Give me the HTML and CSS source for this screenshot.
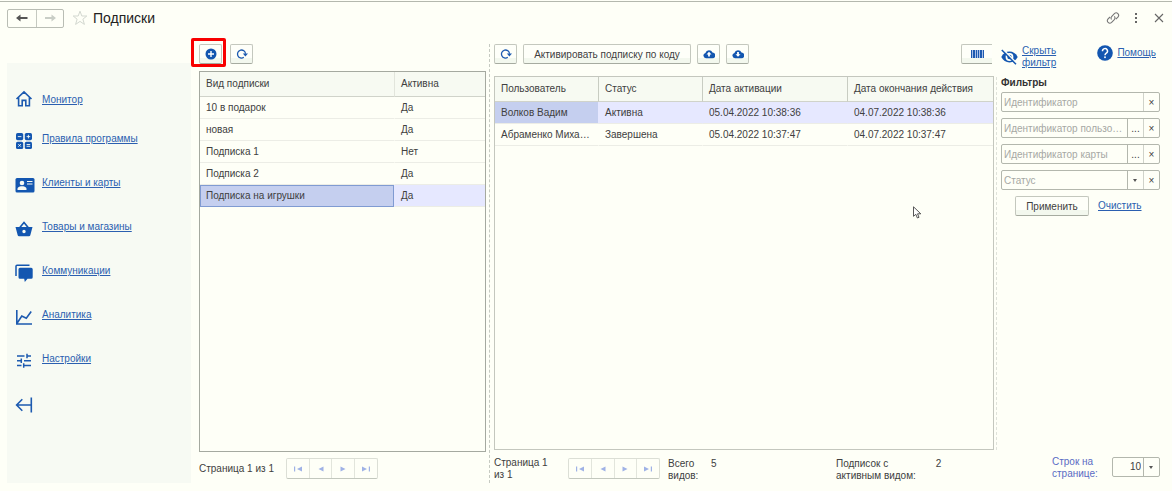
FILE: index.html
```
<!DOCTYPE html>
<html lang="ru">
<head>
<meta charset="UTF-8">
<meta name="viewport" content="width=device-width, initial-scale=1.0">
<title>Подписки</title>
<link rel="stylesheet" href="styles.css">
</head>
<body>
<header class="header">
    <div class="history">
        <button type="button" aria-label="Назад"><svg width="12" height="8" viewBox="0 0 12 8"><path d="M0 4L4.5 0.5V3H11.5V5H4.5V7.5Z" fill="#555"/></svg></button>
        <button type="button" class="off" aria-label="Вперед"><svg width="12" height="8" viewBox="0 0 12 8"><path d="M12 4L7.5 0.5V3H1V5H7.5V7.5Z" fill="#c9cec6"/></svg></button>
    </div>
    <svg class="star" width="16" height="16" viewBox="0 0 16 16"><path d="M8 1.2L9.8 6H14.8L10.9 9.2L12.4 14.4L8 11.4L3.6 14.4L5.1 9.2L1.2 6H6.2Z" fill="none" stroke="#d3d8d0"/></svg>
    <h1>Подписки</h1>
    <div class="window-buttons">
        <button type="button" aria-label="Ссылка"><svg width="14" height="14" viewBox="0 0 14 14" fill="none" stroke="#777" stroke-width="1.1"><path d="M5.5 8.5A2.4 2.4 0 0 1 5.6 5.6L8.6 2.4A2.5 2.5 0 0 1 12.1 5.9L9.9 8.1M8.3 5.4A2.4 2.4 0 0 1 8.3 8.6L5.4 11.6A2.5 2.5 0 0 1 1.9 8.1L4 6"/></svg></button>
        <button type="button" aria-label="Меню"><svg width="14" height="14" viewBox="0 0 14 14" fill="#666"><rect x="6" y="2" width="2" height="2"/><rect x="6" y="6" width="2" height="2"/><rect x="6" y="10" width="2" height="2"/></svg></button>
        <button type="button" aria-label="Закрыть"><svg width="14" height="14" viewBox="0 0 14 14" stroke="#666" stroke-width="1.1"><path d="M3 3L11 11M11 3L3 11"/></svg></button>
    </div>
</header>

<main class="main">
    <nav class="sidebar">
        <ul>
            <li class="home"><svg width="18" height="18" viewBox="0 0 18 18" fill="none" stroke="#1d5ab0" stroke-width="1.6"><path d="M1.5 9L9 1.8L16.5 9M3.6 7.5V15.7H7.2V10.4H10.8V15.7H14.4V7.5"/></svg><a href="#">Монитор</a></li>
            <li><svg width="18" height="18" viewBox="0 0 18 18" fill="#1356b0"><rect x="1" y="1" width="7.2" height="7.2" rx="1.6"/><rect x="9.8" y="1" width="7.2" height="7.2" rx="1.6"/><rect x="1" y="9.8" width="7.2" height="7.2" rx="1.6"/><rect x="9.8" y="9.8" width="7.2" height="7.2" rx="1.6"/><path d="M2.8 4.6H6.4M11.6 4.6H15.2M13.4 2.8V6.4M3.3 12.1L5.9 14.7M5.9 12.1L3.3 14.7M11.6 12.5H15.2M11.6 14.3H15.2" stroke="#f7faf3" stroke-width="0.9"/></svg><a href="#">Правила программы</a></li>
            <li><svg width="20" height="18" viewBox="0 0 20 18" fill="#1356b0"><rect x="0.5" y="2" width="19" height="14.5" rx="1.5"/><circle cx="7" cy="7" r="2.3" fill="#f7faf3"/><path d="M2.5 14V12.8C2.5 10.8 5.5 10.2 7 10.2S11.5 10.8 11.5 12.8V14Z" fill="#f7faf3"/><path d="M12 5.5H17.5M12 8H17.5" stroke="#f7faf3" stroke-width="1.1"/></svg><a href="#">Клиенты и карты</a></li>
            <li><svg width="18" height="18" viewBox="0 0 18 18" fill="#1356b0"><path fill-rule="evenodd" d="M0.5 7H4.2L9 1.2L13.8 7H17.5L15.3 15.2Q15 16.3 14 16.3H4Q3 16.3 2.7 15.2ZM6.3 7H11.7L9 3.7ZM9 9.8A1.7 1.7 0 1 0 9 13.2A1.7 1.7 0 1 0 9 9.8Z"/></svg><a href="#">Товары и магазины</a></li>
            <li><svg width="18" height="18" viewBox="0 0 18 18" fill="#1356b0"><path d="M1 12V2.2Q1 1.2 2 1.2H14.5" fill="none" stroke="#1356b0" stroke-width="1.5"/><path d="M5 3.8H16.2Q17.7 3.8 17.7 5.3V13.3Q17.7 14.8 16.2 14.8H12.5L9.8 18L9.2 14.8H5Q3.5 14.8 3.5 13.3V5.3Q3.5 3.8 5 3.8Z"/></svg><a href="#">Коммуникации</a></li>
            <li><svg width="18" height="18" viewBox="0 0 18 18" fill="none" stroke="#1d5ab0" stroke-width="1.6"><path d="M1.8 2V16H17M2.2 15L6.8 8L11.3 10.3L16.2 3.5"/></svg><a href="#">Аналитика</a></li>
            <li><svg width="18" height="18" viewBox="0 0 18 18" fill="none" stroke="#1d5ab0" stroke-width="1.5"><path d="M2 4H9.5M12 1.7V6.3M12 4H16M2 8.7H5.8M6.3 6.4V11M9 8.7H16M2 13.5H6.5M8.7 11.2V15.8M8.7 13.5H16"/></svg><a href="#">Настройки</a></li>
            <li><button type="button" class="collapse" aria-label="Свернуть меню"><svg width="18" height="18" viewBox="0 0 18 18" fill="none" stroke="#1d5ab0" stroke-width="1.6"><path d="M16.3 1.5V16.5M16 9H1.5M7.3 3.2L1.6 9L7.3 14.8"/></svg></button></li>
        </ul>
    </nav>

    <section class="kinds">
        <div class="toolbar">
            <div class="marked"><button type="button" class="btn" aria-label="Добавить"><svg width="12" height="12" viewBox="0 0 12 12"><circle cx="6" cy="6" r="5.5" fill="#1356b0"/><path d="M6 3V9M3 6H9" stroke="#fff" stroke-width="1.4"/></svg></button></div>
            <button type="button" class="btn" aria-label="Обновить"><svg width="12" height="12" viewBox="0 0 12 12"><path d="M7.8 9.3A4 4 0 1 1 9.5 5.8" fill="none" stroke="#1d5ab0" stroke-width="1.3"/><path d="M6.8 5.5H12L9.4 8.5Z" fill="#1d5ab0"/></svg></button>
        </div>
        <div class="grid-box">
            <table class="kinds-table">
                <thead>
                    <tr><th>Вид подписки</th><th>Активна</th></tr>
                </thead>
                <tbody>
                    <tr><td>10 в подарок</td><td>Да</td></tr>
                    <tr><td>новая</td><td>Да</td></tr>
                    <tr><td>Подписка 1</td><td>Нет</td></tr>
                    <tr><td>Подписка 2</td><td>Да</td></tr>
                    <tr class="selected"><td>Подписка на игрушки</td><td>Да</td></tr>
                </tbody>
            </table>
        </div>
        <div class="footer">
            <span>Страница 1 из 1</span>
            <div class="pager">
                <button type="button" aria-label="Первая"><svg width="8" height="6" viewBox="0 0 8 6"><path d="M0 0.5H1.2V5.5H0ZM8 0.5V5.5L3 3Z"/></svg></button>
                <button type="button" aria-label="Предыдущая"><svg width="8" height="6" viewBox="0 0 8 6"><path d="M6.5 0.5V5.5L1.5 3Z"/></svg></button>
                <button type="button" aria-label="Следующая"><svg width="8" height="6" viewBox="0 0 8 6"><path d="M1.5 0.5V5.5L6.5 3Z"/></svg></button>
                <button type="button" aria-label="Последняя"><svg width="8" height="6" viewBox="0 0 8 6"><path d="M8 0.5H6.8V5.5H8ZM0 0.5V5.5L5 3Z"/></svg></button>
            </div>
        </div>
    </section>

    <section class="users">
        <div class="toolbar">
            <button type="button" class="btn" aria-label="Обновить"><svg width="12" height="12" viewBox="0 0 12 12"><path d="M7.8 9.3A4 4 0 1 1 9.5 5.8" fill="none" stroke="#1d5ab0" stroke-width="1.3"/><path d="M6.8 5.5H12L9.4 8.5Z" fill="#1d5ab0"/></svg></button>
            <button type="button" class="btn wide">Активировать подписку по коду</button>
            <button type="button" class="btn" aria-label="Выгрузить"><svg width="12" height="10" viewBox="0 0 12 10"><path d="M3 9.2A2.7 2.7 0 0 1 2.4 3.9A3.8 3.8 0 0 1 9.5 3.6A2.8 2.8 0 0 1 9.3 9.2Z" fill="#1356b0"/><path d="M6 2.8L8.5 5.4H6.9V7.6H5.1V5.4H3.5Z" fill="#fff"/></svg></button>
            <button type="button" class="btn" aria-label="Загрузить"><svg width="12" height="10" viewBox="0 0 12 10"><path d="M3 9.2A2.7 2.7 0 0 1 2.4 3.9A3.8 3.8 0 0 1 9.5 3.6A2.8 2.8 0 0 1 9.3 9.2Z" fill="#1356b0"/><path d="M6 7.8L8.5 5.2H6.9V3H5.1V5.2H3.5Z" fill="#fff"/></svg></button>
            <button type="button" class="btn barcode" aria-label="Штрихкод"><svg width="13" height="8" viewBox="0 0 13 8" fill="#1d5ab0"><rect width="13" height="8" fill="#a9bfe6"/><path d="M0 0H1V8H0ZM2 0H4V8H2ZM5 0H6V8H5ZM7 0H8V8H7ZM9 0H11V8H9ZM12 0H13V8H12Z"/></svg></button>
        </div>
        <div class="grid-box">
            <table class="users-table">
                <thead>
                    <tr><th>Пользователь</th><th>Статус</th><th>Дата активации</th><th>Дата окончания действия</th></tr>
                </thead>
                <tbody>
                    <tr class="selected"><td>Волков Вадим</td><td>Активна</td><td>05.04.2022 10:38:36</td><td>04.07.2022 10:38:36</td></tr>
                    <tr><td>Абраменко Миха…</td><td>Завершена</td><td>05.04.2022 10:37:47</td><td>04.07.2022 10:37:47</td></tr>
                </tbody>
            </table>
            <svg class="cursor" width="9" height="13" viewBox="0 0 9 13"><path d="M0.5 0.8V10.3L2.8 8.3L4.4 12L6 11.3L4.5 7.8H7.8Z" fill="#fff" stroke="#444" stroke-width="0.9"/></svg>
        </div>
        <div class="footer">
            <span class="page">Страница 1 из 1</span>
            <div class="pager">
                <button type="button" aria-label="Первая"><svg width="8" height="6" viewBox="0 0 8 6"><path d="M0 0.5H1.2V5.5H0ZM8 0.5V5.5L3 3Z"/></svg></button>
                <button type="button" aria-label="Предыдущая"><svg width="8" height="6" viewBox="0 0 8 6"><path d="M6.5 0.5V5.5L1.5 3Z"/></svg></button>
                <button type="button" aria-label="Следующая"><svg width="8" height="6" viewBox="0 0 8 6"><path d="M1.5 0.5V5.5L6.5 3Z"/></svg></button>
                <button type="button" aria-label="Последняя"><svg width="8" height="6" viewBox="0 0 8 6"><path d="M8 0.5H6.8V5.5H8ZM0 0.5V5.5L5 3Z"/></svg></button>
            </div>
            <dl class="totals">
                <dt>Всего<br>видов:</dt><dd>5</dd>
                <dt>Подписок с<br>активным видом:</dt><dd>2</dd>
            </dl>
        </div>
    </section>

    <aside class="side">
        <div class="links">
            <svg class="eye" width="17" height="16" viewBox="0 0 17 16"><path d="M0.3 8C2 4.5 5 2.6 8.5 2.6S15 4.5 16.7 8C15 11.5 12 13.4 8.5 13.4S2 11.5 0.3 8Z" fill="#1356b0"/><circle cx="8.5" cy="8" r="3.9" fill="#fefff7"/><circle cx="8.5" cy="8" r="2.2" fill="#1356b0"/><path d="M1.8 0.2L15.8 14.2" stroke="#fefff7" stroke-width="1.6"/><path d="M0.8 1L15 15.2" stroke="#1356b0" stroke-width="1.5"/></svg>
            <a href="#" class="hide-filter">Скрыть фильтр</a>
            <div class="help">
                <svg width="16" height="16" viewBox="0 0 16 16"><circle cx="8" cy="8" r="7.8" fill="#1356b0"/><path d="M5.5 6.3A2.5 2.5 0 1 1 9.3 8.2Q8 9 8 10.2" fill="none" stroke="#fff" stroke-width="1.5"/><rect x="7.2" y="11.4" width="1.6" height="1.7" fill="#fff"/></svg>
                <a href="#">Помощь</a>
            </div>
        </div>
        <form class="filters">
            <h2>Фильтры</h2>
            <div class="field"><input type="text" placeholder="Идентификатор" aria-label="Идентификатор"><button type="button" aria-label="Очистить">×</button></div>
            <div class="field"><input type="text" placeholder="Идентификатор пользователя" aria-label="Идентификатор пользователя"><button type="button" class="dots" aria-label="Выбрать">...</button><button type="button" aria-label="Очистить">×</button></div>
            <div class="field"><input type="text" placeholder="Идентификатор карты" aria-label="Идентификатор карты"><button type="button" class="dots" aria-label="Выбрать">...</button><button type="button" aria-label="Очистить">×</button></div>
            <div class="field">
                <div class="drop">
                    <select class="empty" aria-label="Статус">
                        <option>Статус</option>
                    </select>
                    <span class="arrow"></span>
                </div>
                <button type="button" aria-label="Очистить">×</button>
            </div>
            <div class="actions">
                <button type="button" class="btn apply">Применить</button>
                <a href="#">Очистить</a>
            </div>
        </form>
        <div class="rows">
            <label for="rows">Строк на странице:</label>
            <div class="field">
                <div class="drop">
                    <select id="rows" class="count">
                        <option>10</option>
                    </select>
                    <span class="arrow"></span>
                </div>
            </div>
        </div>
    </aside>
</main>
</body>
</html>
```
FILE: styles.css
```
* {
    box-sizing: border-box;
}

body {
    margin: 0;
    min-height: 100vh;
    display: flex;
    flex-direction: column;
    background: #fefff7;
    color: #404040;
    font-family: "Liberation Sans", Arial, sans-serif;
    font-size: 10px;
    line-height: 12px;
}

button, input, select {
    font-family: inherit;
    font-size: 10px;
    color: #404040;
}

button {
    display: flex;
    align-items: center;
    justify-content: center;
    padding: 0;
    border: none;
    background: none;
    cursor: pointer;
}

svg {
    display: block;
    flex-shrink: 0;
}

a {
    color: #2b5fb0;
}

.header {
    display: flex;
    align-items: center;
    height: 33px;
    margin-top: 1px;
    padding: 0 6px 0 7px;
    border-top: 1px solid #b4b8ae;
}

.history {
    display: flex;
    border: 1px solid #b9bdb4;
    border-radius: 2px;
}

.history button {
    width: 28px;
    height: 17px;
}

.history .off {
    width: 27px;
    border-left: 1px solid #c5c9c0;
}

.star {
    margin-left: 8px;
}

h1 {
    margin: 0 0 0 5px;
    font-size: 14px;
    font-weight: normal;
    line-height: 18px;
    color: #222;
}

.window-buttons {
    display: flex;
    gap: 9px;
    margin-left: auto;
}

.main {
    flex: 1;
    display: flex;
    padding: 10px 12px 8px 7px;
}

/* left menu */
.sidebar {
    width: 184px;
    flex-shrink: 0;
    margin-top: 19px;
    padding: 15px 8px;
    background: #f7faf3;
}

.sidebar ul {
    margin: 0;
    padding: 0;
    list-style: none;
}

.sidebar li {
    display: grid;
    grid-template-columns: 19px 1fr;
    column-gap: 8px;
    align-items: center;
    justify-items: start;
    height: 44px;
}

.sidebar a {
    padding-bottom: 4px;
}

.sidebar .home {
    height: 41px;
}

.sidebar .home a {
    padding: 3px 0 0;
}

/* toolbars */
.toolbar {
    display: flex;
    gap: 6px;
}

.btn {
    width: 23px;
    height: 20px;
    border: 1px solid #c4c8be;
    border-bottom-color: #a6aba0;
    border-radius: 2px;
    background: linear-gradient(#fefff9 70%, #f3f8ee 70%);
}

.btn.wide {
    width: 168px;
}

.marked {
    position: relative;
    margin-right: 2px;
}

.marked::after {
    content: "";
    position: absolute;
    box-sizing: border-box;
    top: -6px;
    left: -8px;
    width: 35px;
    height: 29px;
    border: 3px solid #f80000;
    border-radius: 2px;
    pointer-events: none;
}

.barcode {
    width: 31px;
    margin: 0 2px 0 auto;
    border-right: none;
    border-radius: 2px 0 0 2px;
}

/* tables */
.kinds, .users {
    display: flex;
    flex-direction: column;
}

.kinds {
    width: 287px;
    flex-shrink: 0;
    margin: 0 3px 0 8px;
}

.users {
    flex: 1;
    min-width: 0;
    padding-left: 4px;
    border-left: 1px dashed #c6cac2;
}

.grid-box {
    position: relative;
    flex: 1;
    margin-top: 7px;
    border: 1px solid #a5a9a0;
}

.users .grid-box {
    margin-top: 12px;
    border-color: #c4c7be;
}

table {
    width: 100%;
    table-layout: fixed;
    border-collapse: separate;
    border-spacing: 0;
}

th, td {
    height: 22px;
    padding: 0 6px;
    border-bottom: 1px solid #ecede6;
    font-weight: normal;
    text-align: left;
    white-space: nowrap;
    overflow: hidden;
}

th {
    height: 25px;
    background: #f7faf2;
    border-bottom-color: #d0d3ca;
}

th + th {
    border-left: 1px solid #e2e5dc;
}

td + td {
    border-left: 1px solid transparent;
}

.kinds-table th:first-child {
    width: 194px;
}

.selected td {
    background: #e6e8ff;
}

.selected td:first-child {
    background: #c5cfef;
}

.kinds-table .selected td:first-child {
    border: 1px solid #809bd2;
    padding-left: 5px;
}

.users-table th:first-child {
    width: 103px;
}

.users-table th:nth-child(2) {
    width: 104px;
}

.users-table th:nth-child(3) {
    width: 145px;
}

.users-table th + th {
    border-left-color: #c8ccc2;
}

.cursor {
    position: absolute;
    left: 418px;
    top: 129px;
}

.footer {
    display: flex;
    align-items: center;
    gap: 12px;
    height: 31px;
    padding-top: 2px;
}

.users .footer {
    height: 33px;
    gap: 8px;
    padding-top: 4px;
}

.page {
    width: 66px;
    padding-right: 8px;
}

.pager {
    display: flex;
    width: 92px;
    border: 1px solid #dcdfd6;
    border-bottom-color: #c3c8be;
    border-radius: 2px;
}

.pager button {
    flex: 1;
    height: 19px;
}

.pager button + button {
    border-left: 1px solid #e2e5dc;
}

.pager path {
    fill: #9fb2e6;
}

.totals {
    display: flex;
    margin: 0;
    padding-top: 3px;
}

.totals dd {
    margin: 0;
    width: 130px;
    padding-left: 5px;
}

.totals dt {
    min-width: 38px;
    white-space: nowrap;
}

.totals dd:last-child {
    width: auto;
    padding-left: 20px;
}

/* right side */
.side {
    display: flex;
    flex-direction: column;
    width: 164px;
    flex-shrink: 0;
    margin-left: 2px;
}

.links {
    display: flex;
    align-items: flex-start;
    height: 33px;
    padding: 1px 4px 0 5px;
}

.eye {
    margin-top: 4px;
}

.hide-filter {
    width: 45px;
    margin-left: 4px;
}

.help {
    display: flex;
    align-items: center;
    gap: 4px;
    margin-left: auto;
}

.filters {
    flex: 1;
    padding-left: 4px;
    border-left: 1px dashed #dfe2da;
}

h2 {
    margin: 0 0 3px;
    font-size: 10px;
    line-height: 12px;
    color: #333;
}

.field {
    display: flex;
    height: 20px;
    margin-bottom: 6px;
    border: 1px solid #b3b7ad;
    border-radius: 2px;
}

.field input {
    flex: 1;
    min-width: 0;
    padding: 0 2px;
    border: none;
    background: none;
    text-overflow: ellipsis;
}

.field input::placeholder {
    color: #a6a8a4;
}

.field button {
    width: 16px;
    border-left: 1px solid #d0d3ca;
}

.field .dots {
    border-left-color: #b3b7ad;
}

.drop {
    position: relative;
    flex: 1;
}

.drop select {
    width: 100%;
    height: 100%;
    padding: 0 20px 0 2px;
    border: none;
    background: none;
    appearance: none;
}

.drop .empty {
    color: #a6a8a4;
}

.drop .count {
    padding-right: 18px;
    text-align: right;
    text-align-last: right;
}

.arrow {
    position: absolute;
    top: 0;
    right: 0;
    bottom: 0;
    width: 16px;
    border-left: 1px solid #b3b7ad;
    pointer-events: none;
}

.arrow::after {
    content: "";
    position: absolute;
    top: 8px;
    left: 5px;
    border: 2px solid transparent;
    border-top: 3px solid #555;
}

.actions {
    display: flex;
    align-items: center;
    gap: 9px;
    padding-left: 14px;
}

.apply {
    width: 74px;
}

.rows {
    display: flex;
    align-items: center;
    justify-content: flex-end;
    gap: 9px;
    height: 33px;
}

.rows label {
    width: 51px;
    padding-top: 3px;
    color: #5a6cc4;
}

.rows .field {
    width: 48px;
    margin: 0;
}
```
